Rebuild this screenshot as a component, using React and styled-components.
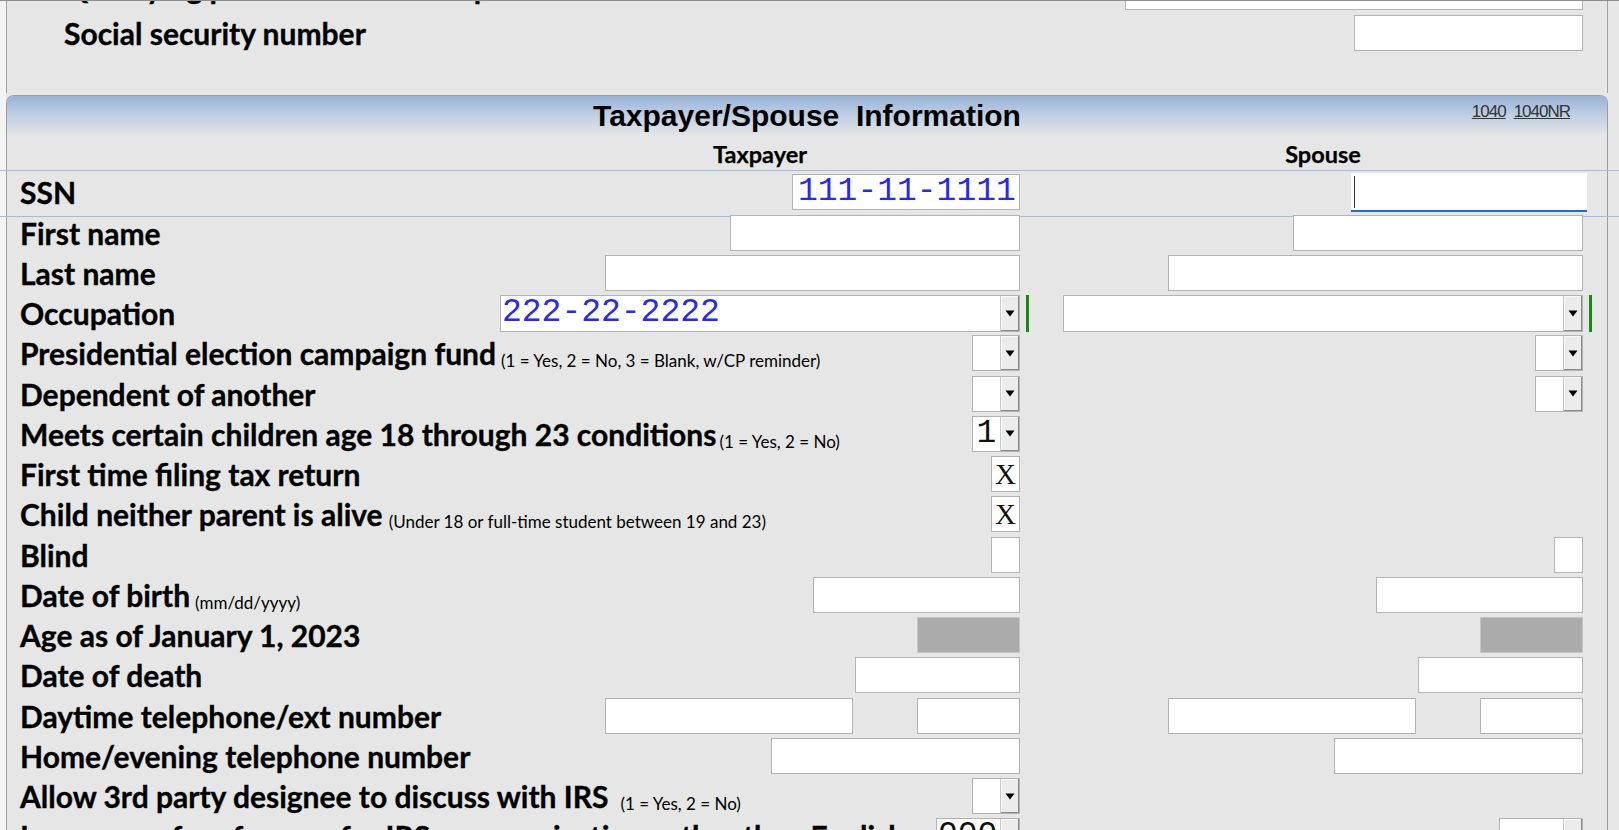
import React from 'react';
import styled, { createGlobalStyle, css } from 'styled-components';

const GlobalStyle = createGlobalStyle`
  html, body { margin: 0; padding: 0; width: 1619px; height: 830px; overflow: hidden; background: #e8e8e8; }
  body { font-family: Lato, "Liberation Sans", sans-serif; color: #000; }
  * { box-sizing: border-box; }
`;

const Viewport = styled.div`
  height: 830px;
  overflow: hidden;
  border-top: 1px solid #8e8e8e;
  background: linear-gradient(to right, #f3f3f3 0 6px, #e7e7e7 6px);
  padding: 0 11px 0 6px;
`;

const UpperSection = styled.section`
  margin-top: -30px;
  padding-bottom: 40px;
  background: #e6e6e6;
  border-left: 1px solid #a2a2a2;
  border-right: 1px solid #a2a2a2;
`;

const Panel = styled.section`
  margin-top: 2px;
  background: #e6e6e6;
  border: 1px solid #9c9c9c;
  border-bottom: none;
  border-radius: 8px 8px 0 0;
  min-height: 800px;
`;

const HeaderBar = styled.header`
  display: grid;
  grid-template-columns: 1fr auto 1fr;
  height: 40px;
  border-radius: 7px 7px 0 0;
  background: linear-gradient(to bottom, #97b2d6 0%, #b9cbe2 40%, #e6e6e6 100%);
`;

const Title = styled.h1`
  grid-column: 2;
  margin: 0;
  font: 700 30px/40px "Liberation Sans", Arial, sans-serif;
  white-space: pre;
`;

const Links = styled.div`
  grid-column: 3;
  justify-self: end;
  display: flex;
  gap: 8px;
  padding: 6px 37px 0 0;
`;

const FormLink = styled.a`
  font: 400 17px/20px "Liberation Sans", Arial, sans-serif;
  letter-spacing: -1px;
  color: #333;
  text-decoration: underline;
`;

const Row = styled.div`
  position: relative;
  display: grid;
  grid-template-columns: minmax(0, 1fr) 520px 43px 520px 24px;
  height: ${p => p.$h || '40.25px'};
  align-items: center;
  ${p => p.$active && css`
    &::before {
      content: '';
      position: absolute;
      left: -7px;
      right: -12px;
      top: -2px;
      bottom: -4px;
      border-top: 1px solid #a3bcdc;
      border-bottom: 1px solid #a3bcdc;
      pointer-events: none;
    }
  `}
`;

const ColHead = styled.div`
  grid-column: ${p => p.$col};
  text-align: center;
  font: 700 23.5px/36.25px Lato, sans-serif;
  -webkit-text-stroke: 0.25px #000;
`;

const Label = styled.div`
  padding-left: ${p => (p.$indent ? '57px' : '13px')};
  margin-top: ${p => (p.$lift ? '-9px' : '0')};
  white-space: nowrap;
  font: 700 30px/40px Lato, sans-serif;
  -webkit-text-stroke: 0.35px #000;
`;

const Hint = styled.span`
  margin-left: ${p => p.$gap || 5}px;
  font: 400 17px Lato, sans-serif;
  -webkit-text-stroke: 0;
  vertical-align: -2px;
`;

const Cell = styled.div`
  grid-column: ${p => p.$col};
  display: flex;
  justify-content: flex-end;
  align-items: center;
  gap: ${p => p.$gap || 0}px;
`;

const BarCell = styled.div`
  grid-column: ${p => p.$col};
  display: flex;
  align-items: center;
  padding-left: 6px;
`;

const GreenBar = styled.div`
  width: 3px;
  height: 37px;
  background: #138a13;
`;

const Box = styled.div`
  width: ${p => p.$w}px;
  height: ${p => p.$h || 36}px;
  border: 1px solid ${p => (p.$grey ? '#c6c6c6' : '#b3b3b3')};
  background: ${p => (p.$grey ? '#ababab' : '#fff')};
  overflow: hidden;
`;

const Mono = styled.div`
  font: 400 33px/34px "Liberation Mono", "Courier New", monospace;
  color: ${p => p.$color || '#2828ee'};
  padding-left: ${p => p.$pad ?? 5}px;
  white-space: nowrap;
  text-align: ${p => p.$align || 'left'};
`;

const FocusBox = styled.div`
  position: relative;
  width: 236px;
  height: 39px;
  margin-right: -4px;
  background: #fff;
  border-bottom: 2px solid #1b6fd1;
  &::after {
    content: '';
    position: absolute;
    left: 3px;
    top: 3px;
    width: 1px;
    height: 32px;
    background: #333;
  }
`;

const ComboFrame = styled.div`
  display: flex;
  width: ${p => p.$w}px;
  height: ${p => p.$h || 36}px;
  border: 1px solid #b3b3b3;
  background: #fff;
`;

const ComboValue = styled.div`
  flex: 1;
  min-width: 0;
  overflow: hidden;
`;

const ComboButton = styled.div`
  width: 19px;
  display: flex;
  align-items: center;
  justify-content: center;
  background: #ececec;
  border-left: 1px solid #c9c9c9;
  box-shadow: inset -1px -1px 0 #8a8a8a, inset 1px 1px 0 #fafafa;
`;

const Check = styled.div`
  width: 29px;
  height: 36px;
  border: 1px solid #b3b3b3;
  background: #fff;
  display: flex;
  align-items: center;
  justify-content: center;
  font: 400 29px/1 "Liberation Serif", "Times New Roman", serif;
  color: #111;
`;

const Arrow = () => (
  <svg width="10" height="7" viewBox="0 0 10 7" aria-hidden="true">
    <path d="M0.5 0.5H9.5L5 6.5Z" fill="#000" />
  </svg>
);

const Combo = ({ w = 48, h, value, color, pad, align }) => (
  <ComboFrame $w={w} $h={h}>
    <ComboValue>
      {value && (
        <Mono $color={color} $pad={pad} $align={align}>
          {value}
        </Mono>
      )}
    </ComboValue>
    <ComboButton>
      <Arrow />
    </ComboButton>
  </ComboFrame>
);

const rows = [
  {
    label: 'SSN',
    active: true,
    tax: <Box $w={228}><Mono $pad={5}>111-11-1111</Mono></Box>,
    spouse: <FocusBox />,
  },
  { label: 'First name', tax: <Box $w={290} />, spouse: <Box $w={290} /> },
  { label: 'Last name', tax: <Box $w={415} />, spouse: <Box $w={415} /> },
  {
    label: 'Occupation',
    tax: <Combo w={520} h={37} value="222-22-2222" pad={1} />,
    spouse: <Combo w={520} h={37} />,
    bar: true,
  },
  {
    label: 'Presidential election campaign fund',
    hint: '(1 = Yes, 2 = No, 3 = Blank, w/CP reminder)',
    tax: <Combo />,
    spouse: <Combo />,
  },
  { label: 'Dependent of another', tax: <Combo />, spouse: <Combo /> },
  {
    label: 'Meets certain children age 18 through 23 conditions',
    hint: '(1 = Yes, 2 = No)',
    hintGap: 3,
    tax: <Combo value="1" color="#111" pad={0} align="center" />,
  },
  { label: 'First time filing tax return', tax: <Check>X</Check> },
  {
    label: 'Child neither parent is alive',
    hint: '(Under 18 or full-time student between 19 and 23)',
    hintGap: 6,
    tax: <Check>X</Check>,
  },
  { label: 'Blind', tax: <Check />, spouse: <Check /> },
  { label: 'Date of birth', hint: '(mm/dd/yyyy)', tax: <Box $w={207} />, spouse: <Box $w={207} /> },
  { label: 'Age as of January 1, 2023', tax: <Box $w={103} $grey />, spouse: <Box $w={103} $grey /> },
  { label: 'Date of death', tax: <Box $w={165} />, spouse: <Box $w={165} /> },
  {
    label: 'Daytime telephone/ext number',
    gap: 64,
    tax: [<Box key="a" $w={248} />, <Box key="b" $w={103} />],
    spouse: [<Box key="a" $w={248} />, <Box key="b" $w={103} />],
  },
  { label: 'Home/evening telephone number', tax: <Box $w={249} />, spouse: <Box $w={249} /> },
  {
    label: 'Allow 3rd party designee to discuss with IRS',
    hint: '(1 = Yes, 2 = No)',
    hintGap: 12,
    tax: <Combo />,
  },
  {
    label: 'Language of preference for IRS communications other than English',
    tax: <Combo w={84} value="000" color="#111" pad={1} />,
    spouse: <Combo w={84} />,
  },
];

export default function App() {
  return (
    <>
      <GlobalStyle />
      <Viewport>
        <UpperSection>
          <Row $h="41px">
            <Label $indent $lift>Qualifying person name/description</Label>
            <Cell $col={4}><Box $w={458} /></Cell>
          </Row>
          <Row $h="41px">
            <Label $indent>Social security number</Label>
            <Cell $col={4}><Box $w={229} /></Cell>
          </Row>
        </UpperSection>
        <Panel>
          <HeaderBar>
            <Title>{'Taxpayer/Spouse  Information'}</Title>
            <Links>
              <FormLink>1040</FormLink>
              <FormLink>1040NR</FormLink>
            </Links>
          </HeaderBar>
          <Row $h="36.25px">
            <ColHead $col={2}>Taxpayer</ColHead>
            <ColHead $col={4}>Spouse</ColHead>
          </Row>
          {rows.map(r => (
            <Row key={r.label} $active={r.active}>
              <Label>
                {r.label}
                {r.hint && <Hint $gap={r.hintGap}>{r.hint}</Hint>}
              </Label>
              <Cell $col={2} $gap={r.gap}>{r.tax}</Cell>
              {r.bar && (
                <BarCell $col={3}>
                  <GreenBar />
                </BarCell>
              )}
              <Cell $col={4} $gap={r.gap}>{r.spouse}</Cell>
              {r.bar && (
                <BarCell $col={5}>
                  <GreenBar />
                </BarCell>
              )}
            </Row>
          ))}
        </Panel>
      </Viewport>
    </>
  );
}
